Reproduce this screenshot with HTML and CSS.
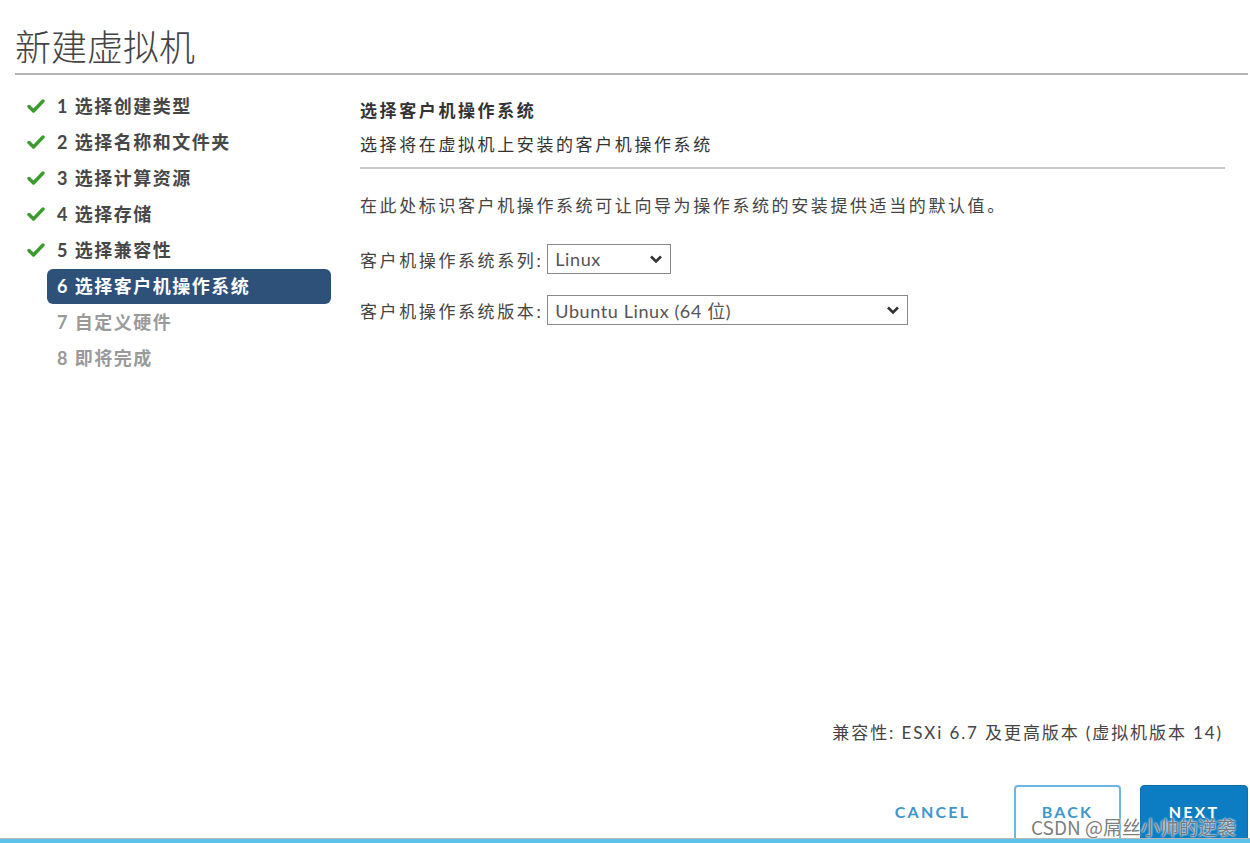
FILE: index.html
```html
<!DOCTYPE html>
<html lang="zh-CN">
<head>
  <meta charset="UTF-8">
  <title>新建虚拟机</title>
  <link rel="stylesheet" href="styles.css">
</head>
<body>

  <div class="wizard">
    <h1 class="wizard-title">新建虚拟机</h1>

    <div class="wizard-body">
      <ul class="steps">
        <li class="step done"><span class="step-icon"><svg width="18" height="16" viewBox="0 0 18 16"><polyline points="2,8.5 6.5,13 16,3" fill="none" stroke="#3c9b2e" stroke-width="3.4" stroke-linecap="round" stroke-linejoin="round"/></svg></span><span class="step-label">1 选择创建类型</span></li>
        <li class="step done"><span class="step-icon"><svg width="18" height="16" viewBox="0 0 18 16"><polyline points="2,8.5 6.5,13 16,3" fill="none" stroke="#3c9b2e" stroke-width="3.4" stroke-linecap="round" stroke-linejoin="round"/></svg></span><span class="step-label">2 选择名称和文件夹</span></li>
        <li class="step done"><span class="step-icon"><svg width="18" height="16" viewBox="0 0 18 16"><polyline points="2,8.5 6.5,13 16,3" fill="none" stroke="#3c9b2e" stroke-width="3.4" stroke-linecap="round" stroke-linejoin="round"/></svg></span><span class="step-label">3 选择计算资源</span></li>
        <li class="step done"><span class="step-icon"><svg width="18" height="16" viewBox="0 0 18 16"><polyline points="2,8.5 6.5,13 16,3" fill="none" stroke="#3c9b2e" stroke-width="3.4" stroke-linecap="round" stroke-linejoin="round"/></svg></span><span class="step-label">4 选择存储</span></li>
        <li class="step done"><span class="step-icon"><svg width="18" height="16" viewBox="0 0 18 16"><polyline points="2,8.5 6.5,13 16,3" fill="none" stroke="#3c9b2e" stroke-width="3.4" stroke-linecap="round" stroke-linejoin="round"/></svg></span><span class="step-label">5 选择兼容性</span></li>
        <li class="step active"><span class="step-icon"></span><span class="step-label">6 选择客户机操作系统</span></li>
        <li class="step todo"><span class="step-icon"></span><span class="step-label">7 自定义硬件</span></li>
        <li class="step todo"><span class="step-icon"></span><span class="step-label">8 即将完成</span></li>
      </ul>

      <div class="content">
        <div class="content-head">
          <h2>选择客户机操作系统</h2>
          <p class="sub">选择将在虚拟机上安装的客户机操作系统</p>
        </div>
        <p class="desc">在此处标识客户机操作系统可让向导为操作系统的安装提供适当的默认值。</p>

        <div class="form-row">
          <span class="form-label">客户机操作系统系列:</span>
          <div class="select select-short">
            <span>Linux</span>
            <svg width="14" height="10" viewBox="0 0 14 10"><polyline points="2,2.5 7,7.5 12,2.5" fill="none" stroke="#333" stroke-width="2.6"/></svg>
          </div>
        </div>
        <div class="form-row">
          <span class="form-label">客户机操作系统版本:</span>
          <div class="select select-long">
            <span>Ubuntu Linux (64 位)</span>
            <svg width="14" height="10" viewBox="0 0 14 10"><polyline points="2,2.5 7,7.5 12,2.5" fill="none" stroke="#333" stroke-width="2.6"/></svg>
          </div>
        </div>
      </div>
    </div>

    <div class="footer">
      <p class="compat">兼容性: ESXi 6.7 及更高版本 (虚拟机版本 14)</p>
      <div class="buttons">
        <button class="btn btn-link">CANCEL</button>
        <button class="btn btn-outline">BACK</button>
        <button class="btn btn-primary">NEXT</button>
      </div>
    </div>
    <div class="bottom-bar"></div>

    <div class="watermark">CSDN @屌丝小帅的逆袭</div>
  </div>

</body>
</html>
```

FILE: styles.css
```css
body { margin: 0; background: #fff; font-family: "Lato", "Noto Sans CJK SC", sans-serif; color: #3a3a3a; }

.wizard { position: relative; height: 843px; display: flex; flex-direction: column; overflow: hidden; }

.wizard-title { margin: 0 2px 0 15px; padding: 24px 0 7px; font-size: 36px; line-height: 42px; font-weight: 300; color: #444; font-family: "Noto Sans CJK SC", sans-serif; border-bottom: 2px solid #b4b4b4; }

.wizard-body { flex: 1; display: flex; }

.steps { list-style: none; margin: 0; padding: 13px 0 0 27px; width: 304px; flex-shrink: 0; }
.step { display: flex; align-items: center; height: 36px; }
.step-icon { width: 20px; display: flex; align-items: center; }
.step-label { flex: 1; height: 35px; line-height: 35px; padding-left: 10px; font-size: 18px; font-weight: 700; letter-spacing: 1.5px; border-radius: 6px; }
.step.done .step-label { color: #474747; }
.step.active .step-label { background: #2e5179; color: #fff; }
.step.todo .step-label { color: #9a9a9a; }

.content { flex: 1; padding: 23px 25px 0 29px; font-size: 17px; letter-spacing: 2.6px; }
.content-head { border-bottom: 2px solid #c8c8c8; padding-bottom: 9px; }
.content-head h2 { margin: 0; font-size: 17px; line-height: 26px; font-weight: 700; color: #333; }
.content-head .sub { margin: 8px 0 0; line-height: 26px; color: #333; }
.desc { margin: 24px 0 25px; line-height: 26px; color: #444; }

.form-row { display: flex; align-items: center; height: 30px; margin-bottom: 21px; }
.form-label { color: #444; margin-right: 4px; }
.select { display: flex; align-items: center; justify-content: space-between; box-sizing: border-box; height: 30px; padding: 0 7px; border: 1px solid #8a8a8a; font-size: 18px; letter-spacing: 0.6px; color: #555; }
.select-short { width: 124px; }
.select-long { width: 361px; }

.footer { padding: 0 2px 0 0; }
.compat { margin: 0 25px 0 0; text-align: right; line-height: 26px; font-size: 17px; letter-spacing: 1.9px; color: #444; }
.buttons { display: flex; justify-content: flex-end; gap: 19px; margin-top: 39px; height: 53px; overflow: hidden; }
.btn { height: 58px; padding: 0 0 6px; width: 107px; font-family: "Lato", sans-serif; font-size: 16px; font-weight: 700; letter-spacing: 2.2px; border-radius: 4px; cursor: pointer; }
.btn-link { background: none; border: none; color: #3d97cd; width: 125px; }
.btn-outline { background: #fff; border: 2px solid #6bb6e4; color: #3d97cd; }
.btn-primary { background: #0c7dc2; border: 1px solid #0a70b0; color: #fff; width: 108px; }

.bottom-bar { height: 4px; border-top: 1px solid #b8b8b8; background: #5cc2ea; }

.watermark { position: absolute; right: 14px; bottom: 3px; font-family: "Noto Sans CJK SC", sans-serif; font-size: 19px; color: rgba(90, 90, 90, 0.8); text-shadow: 0 0 2px #fff, 0 0 2px #fff; }
```
